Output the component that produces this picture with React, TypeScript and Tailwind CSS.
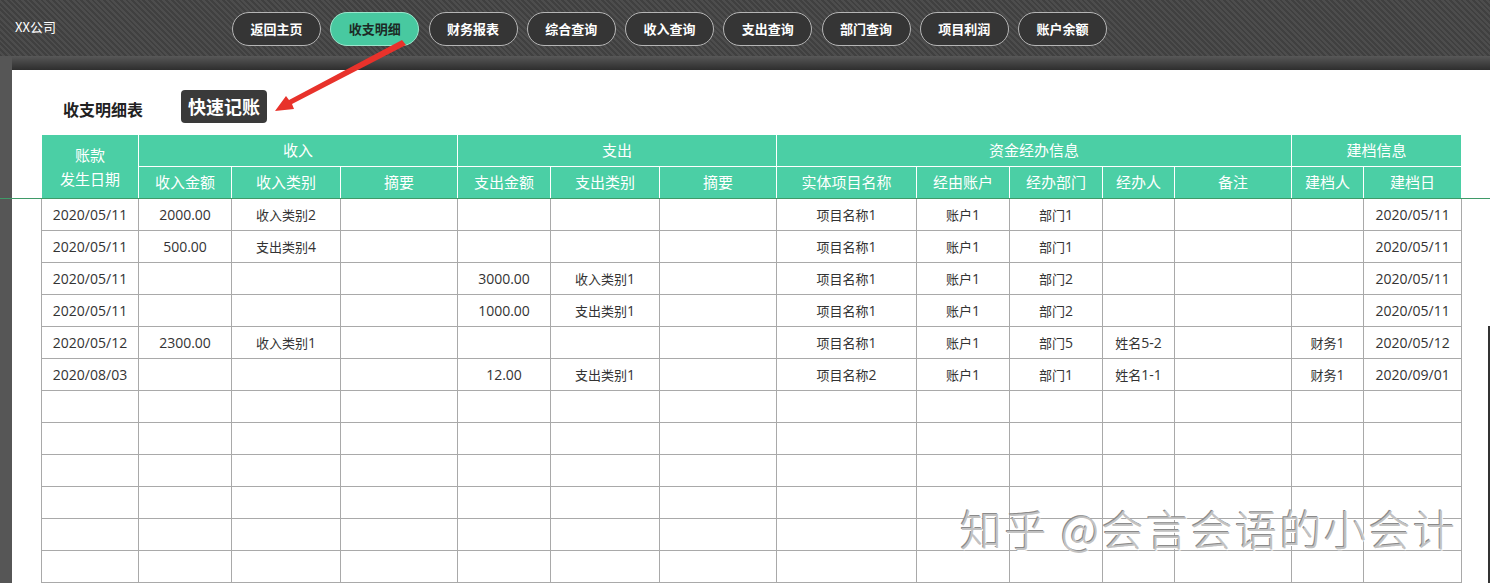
import React from "react";

const navItems = ["返回主页", "收支明细", "财务报表", "综合查询", "收入查询", "支出查询", "部门查询", "项目利润", "账户余额"];

const colWidths = [97, 93, 109, 117, 93, 109, 117, 140, 93, 93, 72, 117, 72, 98];

const subHeads = ["收入金额", "收入类别", "摘要", "支出金额", "支出类别", "摘要", "实体项目名称", "经由账户", "经办部门", "经办人", "备注", "建档人", "建档日"];

const rows: string[][] = [
  ["2020/05/11", "2000.00", "收入类别2", "", "", "", "", "项目名称1", "账户1", "部门1", "", "", "", "2020/05/11"],
  ["2020/05/11", "500.00", "支出类别4", "", "", "", "", "项目名称1", "账户1", "部门1", "", "", "", "2020/05/11"],
  ["2020/05/11", "", "", "", "3000.00", "收入类别1", "", "项目名称1", "账户1", "部门2", "", "", "", "2020/05/11"],
  ["2020/05/11", "", "", "", "1000.00", "支出类别1", "", "项目名称1", "账户1", "部门2", "", "", "", "2020/05/11"],
  ["2020/05/12", "2300.00", "收入类别1", "", "", "", "", "项目名称1", "账户1", "部门5", "姓名5-2", "", "财务1", "2020/05/12"],
  ["2020/08/03", "", "", "", "12.00", "支出类别1", "", "项目名称2", "账户1", "部门1", "姓名1-1", "", "财务1", "2020/09/01"],
];

const emptyRows = Array.from({ length: 6 }, () => Array(14).fill(""));

// latin runs (digits, dots, slashes) render a bit larger than the CJK text
function Cell({ text }: { text: string }) {
  const parts = text.split(/([0-9./\-]+)/).filter(Boolean);
  return (
    <>
      {parts.map((p, i) =>
        /^[0-9./\-]+$/.test(p) ? (
          <span key={i} className="text-[14px]" style={{ fontFamily: '"Open Sans", sans-serif' }}>
            {p}
          </span>
        ) : (
          <span key={i}>{p}</span>
        )
      )}
    </>
  );
}

export default function App() {
  return (
    <div
      className="relative w-full h-[583px] overflow-hidden bg-[#565656]"
      style={{ fontFamily: '"Noto Sans CJK SC", "Noto Sans", sans-serif' }}
    >
      {/* TOP BAR */}
      <header className="flex h-[56px] items-center bg-[repeating-linear-gradient(45deg,#404040_0px,#404040_2px,#4d4d4d_2px,#4d4d4d_4px)]">
        <div className="w-[232px] self-start pl-[15px] pt-[17px] text-[13px] text-white">XX公司</div>
        <nav className="flex gap-[9.25px] pt-[2px]">
          {navItems.map((item) => (
            <button
              key={item}
              className={`h-[34px] w-[89px] rounded-full border text-[13px] font-bold ${
                item === "收支明细"
                  ? "border-[#9ae6cc] bg-[#48c9a0] text-[#1d2b26]"
                  : "border-[#b5b5b5] bg-[#353535] text-white"
              }`}
            >
              {item}
            </button>
          ))}
        </nav>
      </header>

      <div className="flex">
        {/* LEFT STRIP */}
        <div className="w-[12px] shrink-0 bg-[#565656]" />

        <div className="flex-1">
          <div className="h-[14px] bg-gradient-to-b from-[#585858] to-[#2e2e2e]" />

          {/* MAIN CONTENT */}
          <main className="h-[513px] bg-white pl-[29px] pt-[20px]">
            <div className="flex h-[33px] items-center">
              <h1 className="ml-[22px] mt-[4px] text-[16px] font-bold text-[#222]">收支明细表</h1>
              <span className="ml-[38px] rounded-[4px] bg-[#3a3a3a] px-[7px] text-[18px] font-bold leading-[33px] text-white">快速记账</span>
            </div>

            <table className="mt-[11px] table-fixed border-collapse text-center text-[13px] text-[#333]" style={{ width: 1421 }}>
              <colgroup>
                {colWidths.map((w, i) => (
                  <col key={i} style={{ width: w }} />
                ))}
              </colgroup>
              <thead className="bg-[#4bcfa5] text-[15px] text-white">
                <tr className="h-[32px]">
                  <th rowSpan={2} className="border border-white border-b-[#4bcfa5] font-normal leading-[24px]">
                    账款
                    <br />
                    发生日期
                  </th>
                  <th colSpan={3} className="border border-white font-normal">收入</th>
                  <th colSpan={3} className="border border-white font-normal">支出</th>
                  <th colSpan={5} className="border border-white font-normal">资金经办信息</th>
                  <th colSpan={2} className="border border-white font-normal">建档信息</th>
                </tr>
                <tr className="h-[32px]">
                  {subHeads.map((h, i) => (
                    <th key={i} className="border border-white border-b-[#4bcfa5] font-normal">
                      {h}
                    </th>
                  ))}
                </tr>
              </thead>
              <tbody>
                {[...rows, ...emptyRows].map((r, i) => (
                  <tr key={i} className="h-[32px]">
                    {r.map((c, j) => (
                      <td key={j} className="border border-[#a9a9a9] p-0">
                        <Cell text={c} />
                      </td>
                    ))}
                  </tr>
                ))}
              </tbody>
            </table>
          </main>
        </div>
      </div>

      {/* thin green guide line */}
      <div className="absolute left-0 right-0 top-[198px] h-px bg-[#3f9a68]" />

      {/* scrollbar edge */}
      <div className="absolute right-0 top-[326px] bottom-0 w-[2px] bg-[#333]" />

      {/* red arrow */}
      <svg className="absolute left-0 top-0" width="440" height="130" viewBox="0 0 440 130">
        <polygon points="402,40 406,45 292,104 294,109 275,111 286,96 289,100" fill="#e8322b" />
      </svg>

      {/* watermark */}
      <div className="absolute left-[960px] top-[496px] text-[42px] font-light tracking-[2.5px] text-[#c2c2c2] [text-shadow:1px_1px_0_#ffffff,-1px_-1px_0_#8a8a8a]">
        知乎 @会言会语的小会计
      </div>
    </div>
  );
}
